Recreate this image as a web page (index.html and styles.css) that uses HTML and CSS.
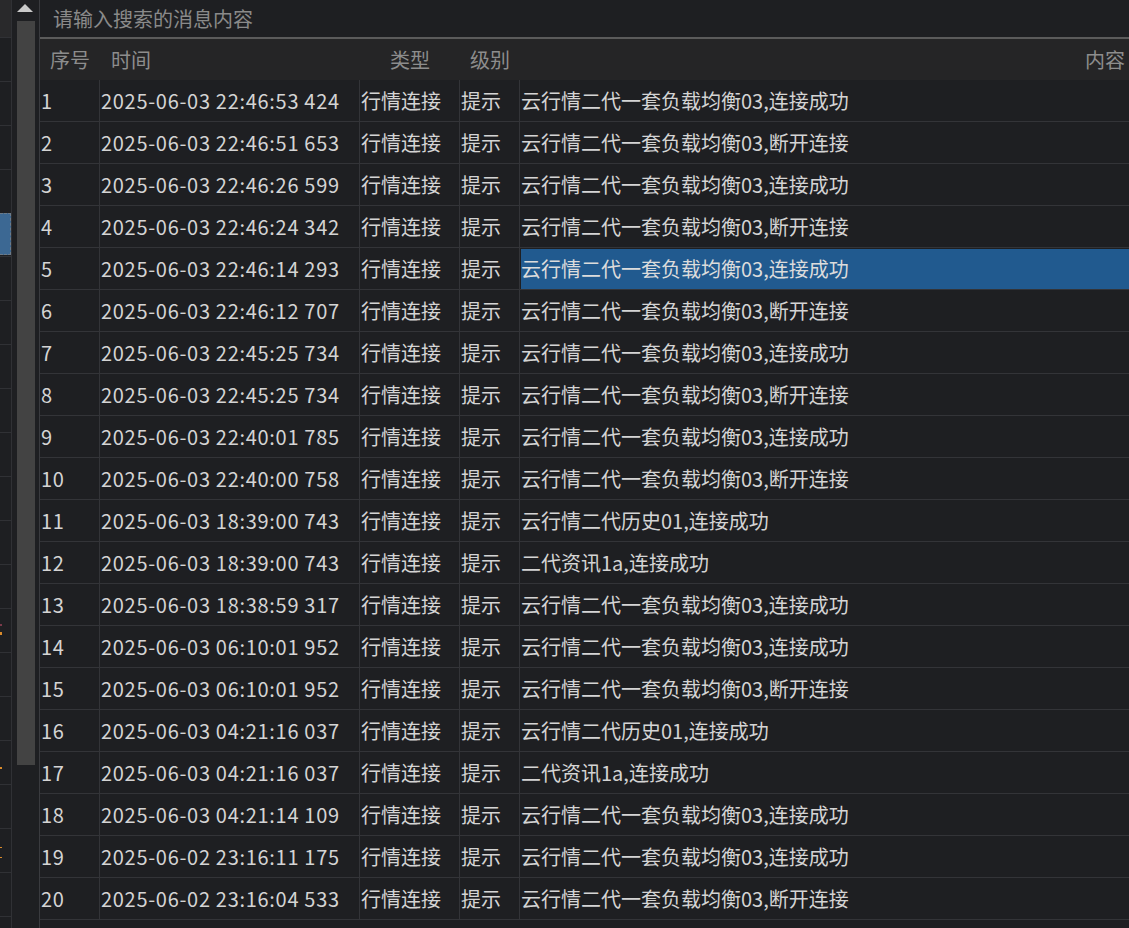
FILE: index.html
```html
<!DOCTYPE HTML>
<html>
<head>
<meta charset="utf-8">
<title>消息日志</title>
<link rel="stylesheet" href="styles.css">
</head>
<body>
<div id="app">

<div id="sidePanel">
	<div class="sideTop"></div>
	<div class="sideRow"></div>
	<div class="sideRow"></div>
	<div class="sideRow"></div>
	<div class="sideRow"></div>
	<div class="sideRow sideSel"></div>
	<div class="sideRow"></div>
	<div class="sideRow"></div>
	<div class="sideRow"></div>
	<div class="sideRow"></div>
	<div class="sideRow"></div>
	<div class="sideRow"></div>
	<div class="sideRow"></div>
	<div class="sideRow"></div>
	<div class="sideRow"><span class="mark markA"></span><span class="mark markR"></span></div>
	<div class="sideRow"></div>
	<div class="sideRow"></div>
	<div class="sideRow"><span class="mark markB"></span></div>
	<div class="sideRow"></div>
	<div class="sideRow"><span class="mark markC"></span><span class="mark markD"></span></div>
	<div class="sideRow"></div>
	<div class="sideRow"></div>
</div>

<div id="scrollBar">
	<div class="arrowUp"></div>
	<div class="thumb"></div>
</div>

<div id="logPanel">
	<div id="searchBox">请输入搜索的消息内容</div>
	<div id="logHead" class="row">
		<div class="c1 hCenter">序号</div>
		<div class="c2 hLeft">时间</div>
		<div class="c3 hCenter">类型</div>
		<div class="c4 hCenter">级别</div>
		<div class="c5 hRight">内容</div>
	</div>
	<div id="logBody">
		<div class="row"><div class="c1">1</div><div class="c2">2025-06-03 22:46:53 424</div><div class="c3">行情连接</div><div class="c4">提示</div><div class="c5">云行情二代一套负载均衡03,连接成功</div></div>
		<div class="row"><div class="c1">2</div><div class="c2">2025-06-03 22:46:51 653</div><div class="c3">行情连接</div><div class="c4">提示</div><div class="c5">云行情二代一套负载均衡03,断开连接</div></div>
		<div class="row"><div class="c1">3</div><div class="c2">2025-06-03 22:46:26 599</div><div class="c3">行情连接</div><div class="c4">提示</div><div class="c5">云行情二代一套负载均衡03,连接成功</div></div>
		<div class="row"><div class="c1">4</div><div class="c2">2025-06-03 22:46:24 342</div><div class="c3">行情连接</div><div class="c4">提示</div><div class="c5">云行情二代一套负载均衡03,断开连接</div></div>
		<div class="row"><div class="c1">5</div><div class="c2">2025-06-03 22:46:14 293</div><div class="c3">行情连接</div><div class="c4">提示</div><div class="c5"><div class="selected">云行情二代一套负载均衡03,连接成功</div></div></div>
		<div class="row"><div class="c1">6</div><div class="c2">2025-06-03 22:46:12 707</div><div class="c3">行情连接</div><div class="c4">提示</div><div class="c5">云行情二代一套负载均衡03,断开连接</div></div>
		<div class="row"><div class="c1">7</div><div class="c2">2025-06-03 22:45:25 734</div><div class="c3">行情连接</div><div class="c4">提示</div><div class="c5">云行情二代一套负载均衡03,连接成功</div></div>
		<div class="row"><div class="c1">8</div><div class="c2">2025-06-03 22:45:25 734</div><div class="c3">行情连接</div><div class="c4">提示</div><div class="c5">云行情二代一套负载均衡03,断开连接</div></div>
		<div class="row"><div class="c1">9</div><div class="c2">2025-06-03 22:40:01 785</div><div class="c3">行情连接</div><div class="c4">提示</div><div class="c5">云行情二代一套负载均衡03,连接成功</div></div>
		<div class="row"><div class="c1">10</div><div class="c2">2025-06-03 22:40:00 758</div><div class="c3">行情连接</div><div class="c4">提示</div><div class="c5">云行情二代一套负载均衡03,断开连接</div></div>
		<div class="row"><div class="c1">11</div><div class="c2">2025-06-03 18:39:00 743</div><div class="c3">行情连接</div><div class="c4">提示</div><div class="c5">云行情二代历史01,连接成功</div></div>
		<div class="row"><div class="c1">12</div><div class="c2">2025-06-03 18:39:00 743</div><div class="c3">行情连接</div><div class="c4">提示</div><div class="c5">二代资讯1a,连接成功</div></div>
		<div class="row"><div class="c1">13</div><div class="c2">2025-06-03 18:38:59 317</div><div class="c3">行情连接</div><div class="c4">提示</div><div class="c5">云行情二代一套负载均衡03,连接成功</div></div>
		<div class="row"><div class="c1">14</div><div class="c2">2025-06-03 06:10:01 952</div><div class="c3">行情连接</div><div class="c4">提示</div><div class="c5">云行情二代一套负载均衡03,连接成功</div></div>
		<div class="row"><div class="c1">15</div><div class="c2">2025-06-03 06:10:01 952</div><div class="c3">行情连接</div><div class="c4">提示</div><div class="c5">云行情二代一套负载均衡03,断开连接</div></div>
		<div class="row"><div class="c1">16</div><div class="c2">2025-06-03 04:21:16 037</div><div class="c3">行情连接</div><div class="c4">提示</div><div class="c5">云行情二代历史01,连接成功</div></div>
		<div class="row"><div class="c1">17</div><div class="c2">2025-06-03 04:21:16 037</div><div class="c3">行情连接</div><div class="c4">提示</div><div class="c5">二代资讯1a,连接成功</div></div>
		<div class="row"><div class="c1">18</div><div class="c2">2025-06-03 04:21:14 109</div><div class="c3">行情连接</div><div class="c4">提示</div><div class="c5">云行情二代一套负载均衡03,连接成功</div></div>
		<div class="row"><div class="c1">19</div><div class="c2">2025-06-02 23:16:11 175</div><div class="c3">行情连接</div><div class="c4">提示</div><div class="c5">云行情二代一套负载均衡03,连接成功</div></div>
		<div class="row"><div class="c1">20</div><div class="c2">2025-06-02 23:16:04 533</div><div class="c3">行情连接</div><div class="c4">提示</div><div class="c5">云行情二代一套负载均衡03,断开连接</div></div>
	</div>
</div>

</div>
</body>
</html>
```

FILE: styles.css
```css
@charset "utf-8";

body{
	margin:0;
	background-color:#1e1f22;
	font-family:"Microsoft YaHei","Noto Sans CJK SC",sans-serif;
	font-size:20px;
	color:#d4d4d4;
	overflow:hidden;
}

#app{
	display:flex;
	width:1129px;
	height:928px;
	overflow:hidden;
}

/* clipped neighbour panel on the far left */
#sidePanel{
	width:11px;
	border-right:1px solid #303135;
	flex-shrink:0;
}

.sideTop{
	height:37px;
	background-color:#29292b;
}

.sideRow{
	position:relative;
	height:43px;
	border-top:1px solid #303135;
}

.sideSel{
	background-color:#3c6893;
	border:1px dashed #6c7a88;
	border-left:none;
	height:42px;
	box-sizing:border-box;
	margin-bottom:1px;
}

.mark{
	position:absolute;
	left:0;
	width:2px;
	height:2px;
	background-color:#d98a2b;
}

.markR{ top:15px; background-color:#7a3a4a; }
.markA{ top:23px; height:3px; }
.markB{ top:26px; }
.markC{ top:18px; height:1px; }
.markD{ top:28px; height:1px; }

/* scroll bar */
#scrollBar{
	width:28px;
	border-right:1px solid #3a3b3f;
	flex-shrink:0;
	padding-top:4px;
	box-sizing:border-box;
}

.arrowUp{
	width:0;
	height:0;
	margin-left:5px;
	border-left:8px solid transparent;
	border-right:8px solid transparent;
	border-bottom:8px solid #c9c9c9;
}

.thumb{
	margin-top:9px;
	margin-left:5px;
	width:18px;
	height:744px;
	background-color:#434343;
}

/* log table */
#logPanel{
	flex:1;
	min-width:0;
}

#searchBox{
	height:37px;
	line-height:37px;
	padding-left:13px;
	color:#8a8a8a;
	border-bottom:2px solid #5b5b5b;
}

.row{
	display:flex;
	height:41px;
	line-height:41px;
	border-bottom:1px solid #333438;
	white-space:nowrap;
}

#logHead{
	background-color:#252526;
	color:#8d8d8d;
	border-bottom:none;
}

.row > div{
	box-sizing:border-box;
	overflow:hidden;
}

.c1{ width:60px; }
.c2{ width:260px; }
.c3{ width:100px; }
.c4{ width:60px; }
.c5{ flex:1; }

#logBody .c1, #logBody .c2, #logBody .c3, #logBody .c4{
	border-right:1px solid #333438;
	padding-left:1px;
}

#logBody .c1, #logBody .c2{
	letter-spacing:0.7px;
}

#logBody .c5{
	padding-left:1px;
}

.hCenter{ text-align:center; }
.hLeft{ padding-left:11px; }
.hRight{ text-align:right; padding-right:4px; }

.selected{
	margin:1px 0 0 0;
	height:40px;
	line-height:39px;
	background-color:#215a8f;
	color:#dcdcdc;
}
```
